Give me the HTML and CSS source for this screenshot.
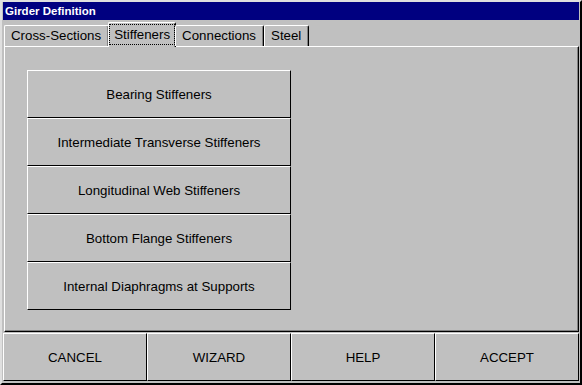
FILE: index.html
```html
<!DOCTYPE html>
<html lang="en">
<head>
    <meta charset="UTF-8">
    <title>Girder Definition</title>
    <link rel="stylesheet" href="styles.css">
</head>
<body>
    <div class="window">
        <div class="title-bar">Girder Definition</div>

        <div class="tabs">
            <div class="tab">Cross-Sections</div>
            <div class="tab active"><span class="focus">Stiffeners</span></div>
            <div class="tab">Connections</div>
            <div class="tab">Steel</div>
        </div>

        <div class="panel">
            <div class="stack">
                <button class="big-btn">Bearing Stiffeners</button>
                <button class="big-btn">Intermediate Transverse Stiffeners</button>
                <button class="big-btn">Longitudinal Web Stiffeners</button>
                <button class="big-btn">Bottom Flange Stiffeners</button>
                <button class="big-btn">Internal Diaphragms at Supports</button>
            </div>
        </div>

        <div class="actions">
            <button class="action">CANCEL</button>
            <button class="action">WIZARD</button>
            <button class="action">HELP</button>
            <button class="action">ACCEPT</button>
        </div>
    </div>
</body>
</html>
```

FILE: styles.css
```css
body {
    margin: 0;
    background-color: #c0c0c0;
    font-family: "Liberation Sans", Arial, sans-serif;
    font-size: 13.3px;
    color: #000;
}
.window {
    width: 582px;
    height: 385px;
    box-sizing: border-box;
    border: 2px solid;
    border-color: #dfdfdf #000 #000 #dfdfdf;
    padding: 0 1px 1px 1px;
    background-color: #c0c0c0;
    display: flex;
    flex-direction: column;
}
.title-bar {
    height: 18px;
    flex-shrink: 0;
    background-color: #000080;
    color: #fff;
    font-weight: bold;
    font-size: 11.5px;
    line-height: 18px;
    padding-left: 2px;
}
.tabs {
    height: 26px;
    flex-shrink: 0;
    display: flex;
    align-items: flex-end;
    padding-left: 1px;
    position: relative;
    z-index: 1;
}
.tab {
    height: 21px;
    box-sizing: border-box;
    padding: 0 7px 0 6px;
    line-height: 20px;
    border-top: 1px solid #fff;
    border-left: 1px solid #fff;
    border-right: 1px solid #000;
    border-radius: 2px 2px 0 0;
    box-shadow: inset -1px 0 #808080;
    background-color: #c0c0c0;
}
.tab.active {
    height: 25px;
    margin: 0 -1px -1px -1px;
    padding: 1px 0 2px 0;
    line-height: 19px;
}
.focus {
    display: block;
    height: 100%;
    box-sizing: border-box;
    border: 1px dotted #000;
    padding: 0 4px;
}
.panel {
    flex: 1;
    margin-left: 1px;
    border-top: 1px solid #fff;
    border-left: 1px solid #fff;
    border-right: 1px solid #000;
    border-bottom: 1px solid #000;
    box-shadow: inset -1px -1px #808080;
    padding: 23px 0 0 22px;
}
.stack {
    width: 264px;
    display: flex;
    flex-direction: column;
}
button {
    font-family: inherit;
    font-size: 13.3px;
    color: #000;
    background-color: #c0c0c0;
    border-top: 1px solid #fff;
    border-left: 1px solid #fff;
    border-right: 1px solid #000;
    border-bottom: 1px solid #000;
    padding: 0;
    margin: 0;
    box-sizing: border-box;
}
.big-btn {
    height: 48px;
}
.actions {
    height: 49px;
    flex-shrink: 0;
    display: flex;
    margin-top: 1px;
}
.action {
    width: 144px;
    height: 48px;
}
```
